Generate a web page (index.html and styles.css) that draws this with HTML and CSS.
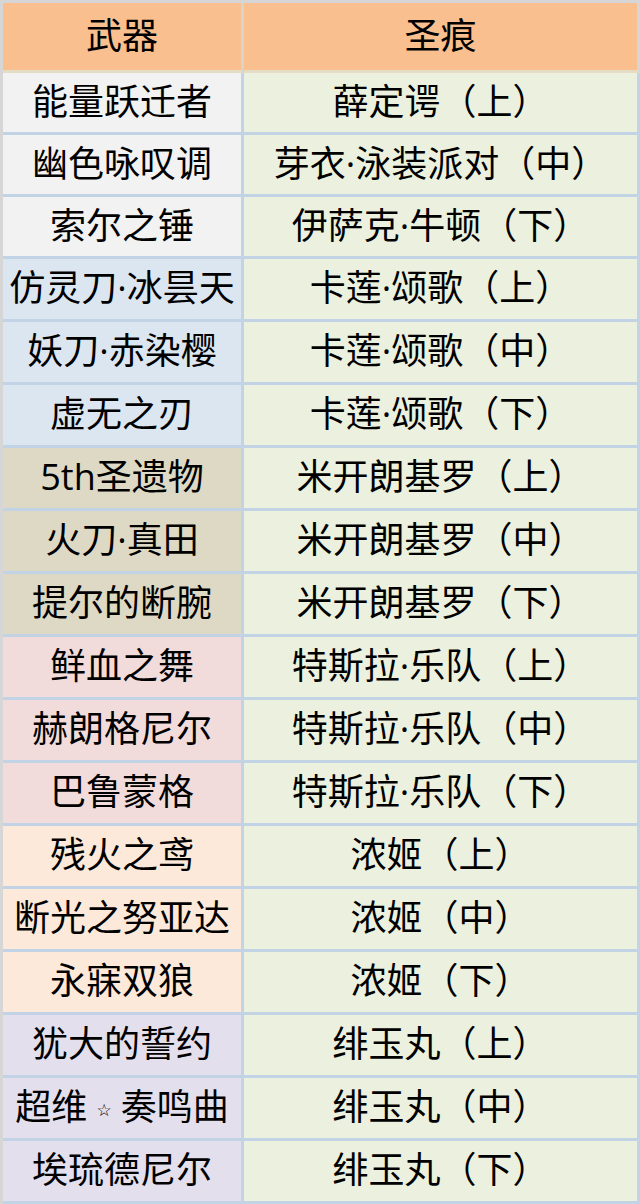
FILE: index.html
```html
<!DOCTYPE html>
<html lang="zh-CN">
<head>
<meta charset="utf-8">
<title>武器 圣痕</title>
<link rel="stylesheet" href="styles.css">
</head>
<body>
<div class="table">
  <div class="cell head head-l">武器</div>
  <div class="cell head head-r">圣痕</div>

  <div class="cell l c-gray">能量跃迁者</div>
  <div class="cell r">薛定谔（上）</div>
  <div class="cell l c-gray">幽色咏叹调</div>
  <div class="cell r">芽衣·泳装派对（中）</div>
  <div class="cell l c-gray">索尔之锤</div>
  <div class="cell r">伊萨克·牛顿（下）</div>

  <div class="cell l c-blue">仿灵刀·冰昙天</div>
  <div class="cell r">卡莲·颂歌（上）</div>
  <div class="cell l c-blue">妖刀·赤染樱</div>
  <div class="cell r">卡莲·颂歌（中）</div>
  <div class="cell l c-blue">虚无之刃</div>
  <div class="cell r">卡莲·颂歌（下）</div>

  <div class="cell l c-tan">5th圣遗物</div>
  <div class="cell r">米开朗基罗（上）</div>
  <div class="cell l c-tan">火刀·真田</div>
  <div class="cell r">米开朗基罗（中）</div>
  <div class="cell l c-tan">提尔的断腕</div>
  <div class="cell r">米开朗基罗（下）</div>

  <div class="cell l c-pink">鲜血之舞</div>
  <div class="cell r">特斯拉·乐队（上）</div>
  <div class="cell l c-pink">赫朗格尼尔</div>
  <div class="cell r">特斯拉·乐队（中）</div>
  <div class="cell l c-pink">巴鲁蒙格</div>
  <div class="cell r">特斯拉·乐队（下）</div>

  <div class="cell l c-peach">残火之鸢</div>
  <div class="cell r">浓姬（上）</div>
  <div class="cell l c-peach">断光之努亚达</div>
  <div class="cell r">浓姬（中）</div>
  <div class="cell l c-peach">永寐双狼</div>
  <div class="cell r">浓姬（下）</div>

  <div class="cell l c-lav">犹大的誓约</div>
  <div class="cell r">绯玉丸（上）</div>
  <div class="cell l c-lav">超维<span class="star">☆</span>奏鸣曲</div>
  <div class="cell r">绯玉丸（中）</div>
  <div class="cell l c-lav">埃琉德尼尔</div>
  <div class="cell r">绯玉丸（下）</div>
</div>
</body>
</html>
```

FILE: styles.css
```css
html, body {
  margin: 0;
  padding: 0;
  background: #ffffff;
}

.table {
  width: 640px;
  display: grid;
  grid-template-columns: 241px 396px;
  grid-template-rows: 70px 62px 62px 62px repeat(15, 63px);
  border-top: 3px solid #d6d6d6;
  border-left: 3px solid #d6d6d6;
  font-family: "Open Sans", "Noto Sans CJK SC", sans-serif;
  font-size: 36px;
  color: #000000;
}

.cell {
  box-sizing: border-box;
  display: flex;
  align-items: center;
  justify-content: center;
  white-space: nowrap;
  border-bottom: 3px solid #c3d3e6;
  border-right: 3px solid #c3d3e6;
  line-height: 1;
  padding-bottom: 2px;
}

.head {
  background: #f9bf8f;
  border-bottom-color: #e4dcc4;
}

.head-l {
  border-right-color: #d9d3c9;
}

.head-r {
  border-right-color: #d6d6d6;
}

.r {
  background: #ebf1de;
}

.c-gray { background: #f2f2f2; }
.c-blue { background: #dce6f1; }
.c-tan { background: #ddd9c4; }
.c-pink { background: #f2dcdb; }
.c-peach { background: #fde9d9; }
.c-lav { background: #e4dfec; }

.star {
  font-family: "DejaVu Sans", sans-serif;
  font-size: 17px;
  padding: 6px 9px 0;
}
```
